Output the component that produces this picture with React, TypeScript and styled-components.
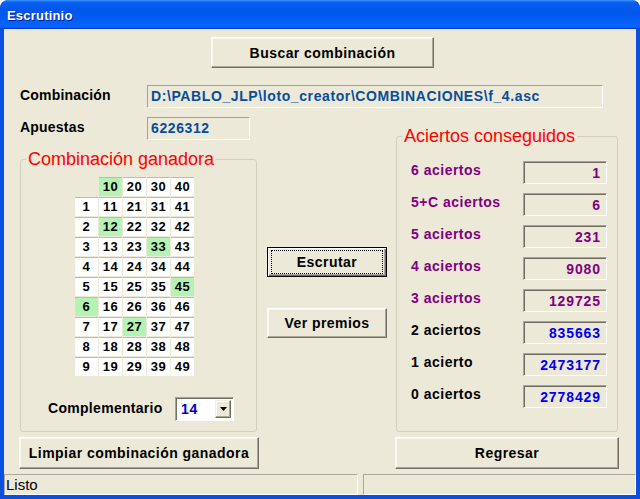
import React from 'react';
import styled, { createGlobalStyle } from 'styled-components';

const Global = createGlobalStyle`
  html, body { margin: 0; padding: 0; background: #ffffff; }
  body { font-family: "Liberation Sans", Arial, sans-serif; }
  #root { width: 640px; height: 499px; }
`;

const FONT = `"Liberation Sans", Arial, sans-serif`;

const Window = styled.div`
  width: 640px;
  height: 499px;
  display: flex;
  flex-direction: column;
  overflow: hidden;
  border-radius: 8px 8px 0 0;
  background: #0a4fe0;
`;

const TitleBar = styled.div`
  flex: none;
  height: 29px;
  box-sizing: border-box;
  padding: 8px 0 0 7px;
  border-radius: 8px 8px 0 0;
  background: linear-gradient(180deg, #3d95ff 0, #0a5ef0 8%, #0055ea 40%, #0862fb 85%, #0766ff 92%, #005bff 95%, #003dd7 97%, #003dd7 100%);
  color: #fff;
  font: bold 13px/16px ${FONT};
  letter-spacing: 0.2px;
  text-shadow: 1px 1px 0 #0c1b8a;
`;

const Frame = styled.div`
  flex: 1;
  display: flex;
  flex-direction: column;
  margin: 0 4px 4px 4px;
  background: #ece9d8;
  min-height: 0;
`;

const Content = styled.div`
  flex: 1;
  display: flex;
  flex-direction: column;
  align-items: flex-start;
  padding: 8px 0 0 15px;
`;

const Button = styled.button<{ $w: number; $h: number; $default?: boolean }>`
  box-sizing: border-box;
  width: ${(p) => p.$w}px;
  height: ${(p) => p.$h}px;
  margin: 0;
  padding: 0;
  display: flex;
  align-items: stretch;
  justify-content: stretch;
  background: #ece9d8;
  color: #000;
  font: bold 14px/16px ${FONT};
  letter-spacing: 0.45px;
  border: 1px solid;
  border-color: ${(p) => (p.$default ? '#000 #000 #000 #000' : '#fff #716f64 #716f64 #fff')};
  box-shadow: ${(p) =>
    p.$default
      ? 'inset 1px 1px 0 #fff, inset -1px -1px 0 #716f64, inset -2px -2px 0 #aca899'
      : 'inset -1px -1px 0 #aca899, inset 1px 1px 0 #f7f6ef'};
`;

const ButtonLabel = styled.span<{ $focus?: boolean }>`
  flex: 1;
  display: flex;
  align-items: center;
  justify-content: center;
  margin: ${(p) => (p.$focus ? '2px 3px 2px 3px' : '0')};
  border: ${(p) => (p.$focus ? '1px dotted #000' : '0')};
`;

const SearchButtonWrap = styled.div`
  margin-left: 192px;
`;

const FieldRow = styled.div`
  display: flex;
  align-items: flex-start;
  padding-left: 1px;
`;

const TopFieldRow = styled(FieldRow)`
  margin-top: 17px;
`;

const FieldLabel = styled.span`
  width: 127px;
  flex: none;
  padding-top: 2px;
  font: bold 14px/16px ${FONT};
  letter-spacing: 0.2px;
  color: #000;
`;

const Field = styled.div<{ $w: number }>`
  box-sizing: border-box;
  width: ${(p) => p.$w}px;
  height: 23px;
  padding-left: 3px;
  border: 1px solid;
  border-color: #a5a293 #fff #fff #a5a293;
  color: #084d9c;
  font: bold 14px/21px ${FONT};
  letter-spacing: 0.6px;
  white-space: nowrap;
  overflow: hidden;
`;

const Main = styled.div`
  margin-top: 9px;
  display: grid;
  grid-template-columns: 240px 120px 224px;
  grid-template-rows: 315px 32px;
  column-gap: 8px;
  row-gap: 5px;
`;

const LeftColumn = styled.div`
  display: flex;
  flex-direction: column;
  min-height: 0;
`;

const MiddleColumn = styled.div`
  display: flex;
  flex-direction: column;
  padding-top: 130px;
  gap: 31px;
`;

const Group = styled.fieldset<{ $top: number; $ml: number; $mr: number }>`
  box-sizing: border-box;
  min-width: 0;
  margin: ${(p) => p.$top}px ${(p) => p.$mr}px 0 ${(p) => p.$ml}px;
  padding: 0;
  border: 1px solid #d0d0bf;
  border-radius: 3px;
  flex: 1;
  display: flex;
  flex-direction: column;
`;

const GroupLegend = styled.legend`
  margin-left: 5px;
  padding: 0 2px;
  color: #ff0000;
  font: 18px/21px ${FONT};
`;

const LeftBody = styled.div`
  padding: 7px 0 10px 0;
  display: flex;
  flex-direction: column;
`;

const NumberGrid = styled.div`
  margin-left: 54px;
  display: grid;
  grid-template-columns: repeat(5, 23px);
  grid-auto-rows: 19px;
  gap: 1px;
`;

const Cell = styled.div<{ $hit?: boolean; $empty?: boolean }>`
  box-sizing: border-box;
  background: ${(p) => (p.$empty ? 'transparent' : p.$hit ? '#b4f3b4' : '#ffffff')};
  border-top: 1px solid ${(p) => (p.$empty ? 'transparent' : '#bdbaad')};
  color: #000;
  font: bold 13px/18px ${FONT};
  letter-spacing: 0.6px;
  text-align: center;
`;

const ComboRow = styled.div`
  margin-top: 21px;
  padding-left: 27px;
  display: flex;
  align-items: center;
`;

const ComboLabel = styled.span`
  width: 127px;
  flex: none;
  margin-top: -3px;
  font: bold 14px/16px ${FONT};
  letter-spacing: 0.3px;
  color: #000;
`;

const Combo = styled.div`
  box-sizing: border-box;
  width: 59px;
  height: 24px;
  display: flex;
  align-items: center;
  background: #fff;
  border: 1px solid;
  border-color: #a5a293 #fff #fff #a5a293;
  box-shadow: inset 1px 1px 0 #716f64;
  padding: 2px 2px 2px 2px;
`;

const ComboValue = styled.span`
  flex: 1;
  padding-left: 3px;
  color: #0000c8;
  font: bold 14px/18px ${FONT};
  letter-spacing: 0.6px;
`;

const ComboButton = styled.span`
  box-sizing: border-box;
  width: 16px;
  height: 18px;
  display: flex;
  align-items: center;
  justify-content: center;
  background: #ece9d8;
  border: 1px solid;
  border-color: #f1efe2 #716f64 #716f64 #f1efe2;
  box-shadow: inset -1px -1px 0 #aca899, inset 1px 1px 0 #fff;
`;

const RightColumn = styled.div`
  display: flex;
  flex-direction: column;
  min-height: 0;
`;

const RightBody = styled.div`
  padding: 14px 10px 23px 14px;
  display: grid;
  grid-template-columns: 1fr 84px;
  grid-auto-rows: 23px;
  row-gap: 9px;
`;

const HitLabel = styled.span<{ $tone: 'purple' | 'black' }>`
  padding-top: 1px;
  color: ${(p) => (p.$tone === 'purple' ? '#800080' : '#000')};
  font: bold 14px/16px ${FONT};
  letter-spacing: 0.5px;
`;

const ValueBox = styled.div<{ $tone: 'purple' | 'blue' }>`
  box-sizing: border-box;
  height: 23px;
  padding-right: 5px;
  border: 1px solid;
  border-color: #a5a293 #fff #fff #a5a293;
  box-shadow: inset 1px 1px 0 #716f64;
  text-align: right;
  color: ${(p) => (p.$tone === 'purple' ? '#800080' : '#0000f0')};
  font: bold 14px/23px ${FONT};
  letter-spacing: 0.9px;
`;

const StatusBar = styled.div`
  flex: none;
  height: 21px;
  display: flex;
  gap: 5px;
`;

const StatusPane = styled.div<{ $w?: number }>`
  box-sizing: border-box;
  ${(p) => (p.$w ? `width: ${p.$w}px; flex: none;` : 'flex: 1;')}
  height: 21px;
  padding-left: 1px;
  border: 1px solid;
  border-color: #aca899 #fff #fff #aca899;
  color: #000;
  font: 15px/19px ${FONT};
`;

const numbers: (number | null)[] = [];
for (let r = 0; r < 10; r++) {
  for (let c = 0; c < 5; c++) {
    const n = c * 10 + r;
    numbers.push(n === 0 ? null : n);
  }
}
const winners = new Set([10, 12, 33, 45, 6, 27]);

const results: { label: string; value: string; purple: boolean }[] = [
  { label: '6 aciertos', value: '1', purple: true },
  { label: '5+C aciertos', value: '6', purple: true },
  { label: '5 aciertos', value: '231', purple: true },
  { label: '4 aciertos', value: '9080', purple: true },
  { label: '3 aciertos', value: '129725', purple: true },
  { label: '2 aciertos', value: '835663', purple: false },
  { label: '1 acierto', value: '2473177', purple: false },
  { label: '0 aciertos', value: '2778429', purple: false },
];

export default function App() {
  return (
    <>
      <Global />
      <Window>
        <TitleBar>Escrutinio</TitleBar>
        <Frame>
          <Content>
            <SearchButtonWrap>
              <Button $w={223} $h={31}>
                <ButtonLabel>Buscar combinación</ButtonLabel>
              </Button>
            </SearchButtonWrap>
            <TopFieldRow>
              <FieldLabel>Combinación</FieldLabel>
              <Field $w={456}>D:\PABLO_JLP\loto_creator\COMBINACIONES\f_4.asc</Field>
            </TopFieldRow>
            <Main>
              <LeftColumn>
                <FieldRow>
                  <FieldLabel>Apuestas</FieldLabel>
                  <Field $w={103}>6226312</Field>
                </FieldRow>
                <Group $top={9} $ml={1} $mr={2}>
                  <GroupLegend>Combinación ganadora</GroupLegend>
                  <LeftBody>
                    <NumberGrid>
                      {numbers.map((n, i) =>
                        n === null ? (
                          <Cell key={i} $empty />
                        ) : (
                          <Cell key={i} $hit={winners.has(n)}>
                            {n}
                          </Cell>
                        )
                      )}
                    </NumberGrid>
                    <ComboRow>
                      <ComboLabel>Complementario</ComboLabel>
                      <Combo>
                        <ComboValue>14</ComboValue>
                        <ComboButton>
                          <svg width="7" height="4" viewBox="0 0 7 4">
                            <path d="M0 0h7L3.5 4z" fill="#000" />
                          </svg>
                        </ComboButton>
                      </Combo>
                    </ComboRow>
                  </LeftBody>
                </Group>
              </LeftColumn>
              <MiddleColumn>
                <Button $w={120} $h={30} $default>
                  <ButtonLabel $focus>Escrutar</ButtonLabel>
                </Button>
                <Button $w={120} $h={30}>
                  <ButtonLabel>Ver premios</ButtonLabel>
                </Button>
              </MiddleColumn>
              <RightColumn>
                <Group $top={9} $ml={1} $mr={1}>
                  <GroupLegend>Aciertos conseguidos</GroupLegend>
                  <RightBody>
                    {results.map((r) => (
                      <React.Fragment key={r.label}>
                        <HitLabel $tone={r.purple ? 'purple' : 'black'}>{r.label}</HitLabel>
                        <ValueBox $tone={r.purple ? 'purple' : 'blue'}>{r.value}</ValueBox>
                      </React.Fragment>
                    ))}
                  </RightBody>
                </Group>
              </RightColumn>
              <Button $w={240} $h={32}>
                <ButtonLabel>Limpiar combinación ganadora</ButtonLabel>
              </Button>
              <div />
              <Button $w={224} $h={32}>
                <ButtonLabel>Regresar</ButtonLabel>
              </Button>
            </Main>
          </Content>
          <StatusBar>
            <StatusPane $w={354}>Listo</StatusPane>
            <StatusPane />
          </StatusBar>
        </Frame>
      </Window>
    </>
  );
}
